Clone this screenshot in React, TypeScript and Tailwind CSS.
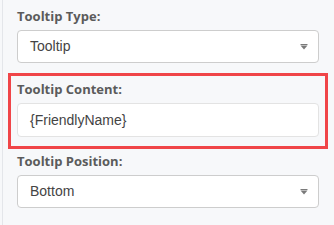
const LABEL = "text-[13px] leading-[18px] font-bold text-[#5b5b5b] [font-family:'Open_Sans',sans-serif]";
const VALUE = "text-[14px] text-[#444] [font-family:'Liberation_Sans',Arial,sans-serif]";

function Caret() {
  return (
    <svg width="8" height="6" viewBox="0 0 8 6" className="shrink-0">
      <rect x="0.5" y="0" width="7" height="1" fill="#7a7a7a" />
      <path d="M0.5 1.5 H7.5 L4 5.5 Z" fill="#7a7a7a" />
    </svg>
  );
}

function SelectBox({ value }: { value: string }) {
  return (
    <div className="flex h-[33px] items-center justify-between rounded-[4px] border border-[#cdcdcd] bg-white pl-3 pr-[10px]">
      <span className={VALUE}>{value}</span>
      <Caret />
    </div>
  );
}

export default function App() {
  return (
    <div className="flex h-[225px] w-[334px] overflow-hidden bg-[#f7f8fa] pl-[2px]">
      <div className="flex flex-1 flex-col border-l border-[#e4e6ea] pl-[14px] pr-[15px] pt-[7px]">
        <div className={LABEL}>Tooltip Type:</div>
        <div className="mt-[5px]">
          <SelectBox value="Tooltip" />
        </div>

        <div className="-mx-[9px] mt-[10px] border-[3px] border-[#f04548] px-[6px] pb-[9px] pt-[4px]">
          <div className={LABEL}>Tooltip Content:</div>
          <div className="mt-[5px] flex h-[34px] items-center rounded-[4px] border border-[#e3e3e3] bg-white pl-3">
            <span className={VALUE}>{"{FriendlyName}"}</span>
          </div>
        </div>

        <div className={`mt-[3px] ${LABEL}`}>Tooltip Position:</div>
        <div className="mt-[5px]">
          <SelectBox value="Bottom" />
        </div>
      </div>
    </div>
  );
}
